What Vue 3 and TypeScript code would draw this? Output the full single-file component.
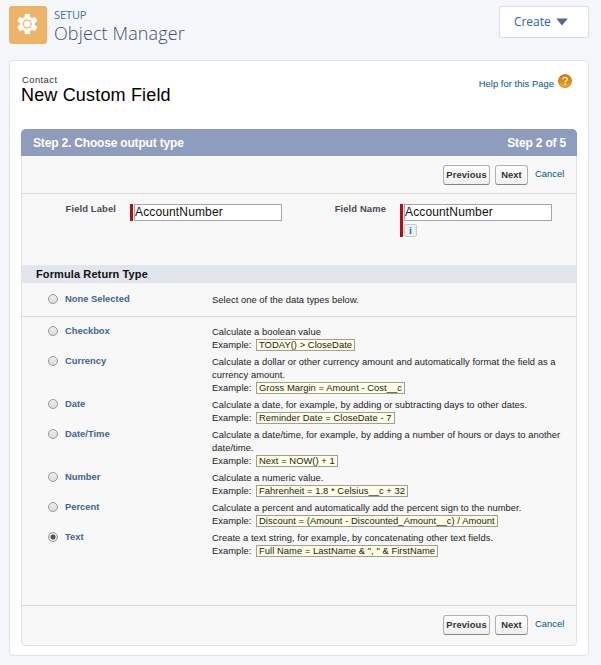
<script setup lang="ts">
import { ref } from 'vue'

interface ReturnType {
  name: string
  lines: string[]
  example: string
}

const fieldLabel = ref('AccountNumber')
const fieldName = ref('AccountNumber')
const selected = ref('Text')

const types: ReturnType[] = [
  { name: 'Checkbox', lines: ['Calculate a boolean value'], example: 'TODAY() > CloseDate' },
  {
    name: 'Currency',
    lines: ['Calculate a dollar or other currency amount and automatically format the field as a', 'currency amount.'],
    example: 'Gross Margin = Amount - Cost__c',
  },
  {
    name: 'Date',
    lines: ['Calculate a date, for example, by adding or subtracting days to other dates.'],
    example: 'Reminder Date = CloseDate - 7',
  },
  {
    name: 'Date/Time',
    lines: ['Calculate a date/time, for example, by adding a number of hours or days to another', 'date/time.'],
    example: 'Next = NOW() + 1',
  },
  { name: 'Number', lines: ['Calculate a numeric value.'], example: 'Fahrenheit = 1.8 * Celsius__c + 32' },
  {
    name: 'Percent',
    lines: ['Calculate a percent and automatically add the percent sign to the number.'],
    example: 'Discount = (Amount - Discounted_Amount__c) / Amount',
  },
  {
    name: 'Text',
    lines: ['Create a text string, for example, by concatenating other text fields.'],
    example: 'Full Name = LastName & ", " & FirstName',
  },
]
</script>

<template>
  <div class="page">
    <header class="top">
      <div class="app-icon">
        <svg viewBox="0 0 38 38" width="38" height="38">
          <g fill="#fff">
            <circle cx="18.3" cy="18" r="7.6" />
            <rect v-for="a in [0, 60, 120]" :key="a" x="15.6" y="7.7" width="5.4" height="20.6" rx="1.4" :transform="`rotate(${a} 18.3 18)`" />
          </g>
          <circle cx="18.3" cy="18" r="3.9" fill="#fff" stroke="#edb467" stroke-width="1.3" />
        </svg>
      </div>
      <div class="titles">
        <span class="setup">SETUP</span>
        <span class="manager">Object Manager</span>
      </div>
      <button class="create">
        <span>Create</span>
        <svg width="12" height="8" viewBox="0 0 12 8"><path d="M0.3 0.5H11.7L6 7.6Z" fill="#52688f" /></svg>
      </button>
    </header>

    <main class="card">
      <div class="heading">
        <div class="heading-text">
          <span class="object">Contact</span>
          <h1>New Custom Field</h1>
        </div>
        <a class="help">
          <span>Help for this Page</span>
          <svg width="14" height="14" viewBox="0 0 14 14">
            <defs>
              <linearGradient id="orb" x1="0" y1="0" x2="0" y2="1">
                <stop offset="0" stop-color="#c77e14" />
                <stop offset="0.5" stop-color="#dc8a12" />
                <stop offset="1" stop-color="#f7ad32" />
              </linearGradient>
            </defs>
            <circle cx="7" cy="7" r="6.6" fill="url(#orb)" stroke="#b87c25" stroke-width="0.7" />
            <path d="M4.9 5.3C4.9 2.7 9.2 2.7 9.2 5.2C9.2 6.8 7.1 6.7 7.1 8.5" fill="none" stroke="#fff1d3" stroke-width="1.4" />
            <rect x="6.4" y="9.5" width="1.5" height="1.5" fill="#fff1d3" />
          </svg>
        </a>
      </div>

      <section class="wizard">
        <div class="step-bar">
          <span class="step-title">Step 2. Choose output type</span>
          <span class="step-count">Step 2 of 5</span>
        </div>

        <div class="actions">
          <button class="btn previous">Previous</button>
          <button class="btn next">Next</button>
          <a class="cancel">Cancel</a>
        </div>

        <div class="fields">
          <label class="label">Field Label</label>
          <div class="required"><input v-model="fieldLabel" /></div>
          <label class="label name-label">Field Name</label>
          <div class="required">
            <input v-model="fieldName" />
            <span class="info">i</span>
          </div>
        </div>

        <h2>Formula Return Type</h2>

        <div class="row none">
          <span class="radio" @click="selected = 'None'"></span>
          <span class="type">None Selected</span>
          <div class="desc"><p>Select one of the data types below.</p></div>
        </div>

        <div class="types">
          <div v-for="t in types" :key="t.name" class="row" @click="selected = t.name">
            <span class="radio" :class="{ on: selected === t.name }"></span>
            <span class="type">{{ t.name }}</span>
            <div class="desc">
              <p v-for="l in t.lines" :key="l">{{ l }}</p>
              <p class="ex"><span>Example:</span><code>{{ t.example }}</code></p>
            </div>
          </div>
        </div>

        <div class="actions bottom">
          <button class="btn previous">Previous</button>
          <button class="btn next">Next</button>
          <a class="cancel">Cancel</a>
        </div>
      </section>
    </main>
  </div>
</template>

<style>
body {
  background: #f4f6fa;
}
</style>

<style scoped>
* {
  box-sizing: border-box;
}
.page {
  width: 601px;
  height: 665px;
  background: #f4f6fa;
  font-family: 'Liberation Sans', Arial, sans-serif;
  color: #222;
  white-space: nowrap;
  overflow: hidden;
}
.top {
  display: flex;
  align-items: flex-start;
  height: 60px;
  padding: 6px 12px 0 9px;
}
.app-icon {
  width: 38px;
  height: 38px;
  border-radius: 3px;
  background: #edb467;
}
.app-icon svg {
  display: block;
}
.titles {
  display: flex;
  flex-direction: column;
  margin-left: 7px;
  flex: 1;
  font-family: 'Open Sans', 'Noto Sans', sans-serif;
}
.setup {
  margin-top: 2px;
  font-size: 11px;
  line-height: 14px;
  letter-spacing: -0.1px;
  color: #3f6fb0;
}
.manager {
  font-size: 18px;
  line-height: 22px;
  font-weight: 300;
  letter-spacing: 0.12px;
  color: #44506b;
}
.create {
  display: flex;
  align-items: center;
  width: 90px;
  height: 32px;
  padding: 0 0 1px 14px;
  gap: 5px;
  border: 1px solid #dadee6;
  border-radius: 3px;
  background: #fff;
  color: #2d63ad;
  font: 12px 'Open Sans', sans-serif;
  letter-spacing: -0.05px;
}
.card {
  width: 580px;
  height: 596px;
  margin-left: 9px;
  padding: 0 11px;
  border: 1px solid #dfe2e8;
  border-radius: 4px;
  background: #fff;
}
.heading {
  display: flex;
  justify-content: space-between;
  height: 68px;
  padding: 13px 5px 0 1px;
}
.heading-text {
  display: flex;
  flex-direction: column;
}
.object {
  height: 11px;
  font-size: 9.4px;
  line-height: 11px;
  letter-spacing: 0.45px;
  color: #333;
}
h1 {
  margin: 0 0 0 -1px;
  font-size: 18px;
  line-height: 20px;
  font-weight: 400;
  letter-spacing: 0.17px;
  color: #000;
}
.help {
  display: flex;
  align-items: flex-start;
  gap: 4px;
  font-size: 9.4px;
  color: #015689;
}
.help span {
  margin-top: 4px;
  line-height: 11px;
  letter-spacing: 0.04px;
}
.wizard {
  display: flex;
  flex-direction: column;
  width: 556px;
  height: 517px;
  border: 1px solid #e2e2e4;
  border-top: 0;
  border-radius: 5px;
  background: #f8f8f8;
}
.step-bar {
  display: flex;
  justify-content: space-between;
  align-items: center;
  height: 27px;
  margin: 0 -1px;
  padding: 0 11px 0 12px;
  border-radius: 5px 5px 0 0;
  background: #8e9dbe;
  color: #fff;
  font-size: 12px;
  font-weight: 700;
  letter-spacing: -0.18px;
}
.actions {
  display: flex;
  justify-content: flex-end;
  height: 38px;
  padding: 9px 11px 0 0;
  border-bottom: 1px solid #d8d8d8;
}
.bottom {
  height: auto;
  flex: 1;
  border-top: 1px solid #d8d8d8;
  border-bottom: 0;
}
.btn {
  height: 20px;
  padding: 0 0 1px;
  border: 1px solid #b0b0b0;
  border-bottom-color: #858585;
  border-radius: 3px;
  background: linear-gradient(#fff, #f0f0f0);
  color: #333;
  font: 700 9.4px 'Liberation Sans', Arial, sans-serif;
  letter-spacing: 0.1px;
}
.previous {
  width: 47px;
}
.next {
  width: 33px;
  margin-left: 5px;
}
.cancel {
  width: 30px;
  margin: 3px 0 0 7px;
  font-size: 9.4px;
  line-height: 11px;
  letter-spacing: 0.05px;
  color: #015689;
}
.fields {
  display: grid;
  grid-template-columns: 94px 168px 102px 168px;
  height: 71px;
  align-items: start;
  padding-top: 10px;
}
.label {
  margin-top: -1px;
  text-align: right;
  font-size: 9.4px;
  line-height: 11px;
  font-weight: 700;
  letter-spacing: 0.13px;
  color: #4a4a56;
}
.required {
  display: flex;
  flex-direction: column;
  align-items: flex-start;
  width: 152px;
  margin-left: 14px;
  border-left: 3px solid #b00d16;
  padding-left: 1px;
}
.required input {
  width: 148px;
  height: 17px;
  padding: 0 0 1px;
  border: 1px solid #a5a5a5;
  border-radius: 0;
  background: #fff;
  outline: 0;
  color: #111;
  font: 12px 'Liberation Sans', Arial, sans-serif;
  letter-spacing: 0.14px;
}
.info {
  width: 13px;
  height: 13px;
  margin: 3px 0 0;
  border: 1px solid #c5cbd1;
  border-radius: 2px;
  background: #eef3f7;
  color: #2577ba;
  font: 700 10px/11px 'Liberation Serif', serif;
  text-align: center;
}
h2 {
  height: 18px;
  margin: 0;
  padding-left: 14px;
  background: #e2e4ee;
  color: #111;
  font-size: 11px;
  line-height: 18px;
  font-weight: 700;
  letter-spacing: 0.11px;
}
.row {
  display: grid;
  grid-template-columns: 43px 147px 1fr;
  align-items: start;
  padding: 2px 0;
  font-size: 9.4px;
}
.none {
  height: 34px;
  padding-top: 10px;
  border-bottom: 1px solid #d8d8d8;
}
.types {
  height: 288px;
  padding-top: 6px;
}
.radio {
  width: 10px;
  height: 10px;
  margin: 1px 0 0 26px;
  border: 1px solid #999;
  border-radius: 50%;
  background: linear-gradient(#eee, #dcdcdc);
}
.radio.on {
  background: radial-gradient(circle, #555 0 2.2px, #e6e6e6 2.8px);
}
.type {
  line-height: 12px;
  font-weight: 700;
  color: #436495;
}
.desc p {
  height: 13px;
  margin: 0;
  line-height: 14px;
  letter-spacing: 0.04px;
}
.desc .ex {
  display: flex;
  align-items: flex-start;
}
.ex span {
  width: 44px;
}
.ex code {
  height: 12px;
  margin-top: 1px;
  padding: 0 2px;
  border: 1px solid #a0a092;
  background: #ffffe6;
  font: 9.4px/9px 'Liberation Sans', Arial, sans-serif;
  letter-spacing: 0.05px;
}
</style>
